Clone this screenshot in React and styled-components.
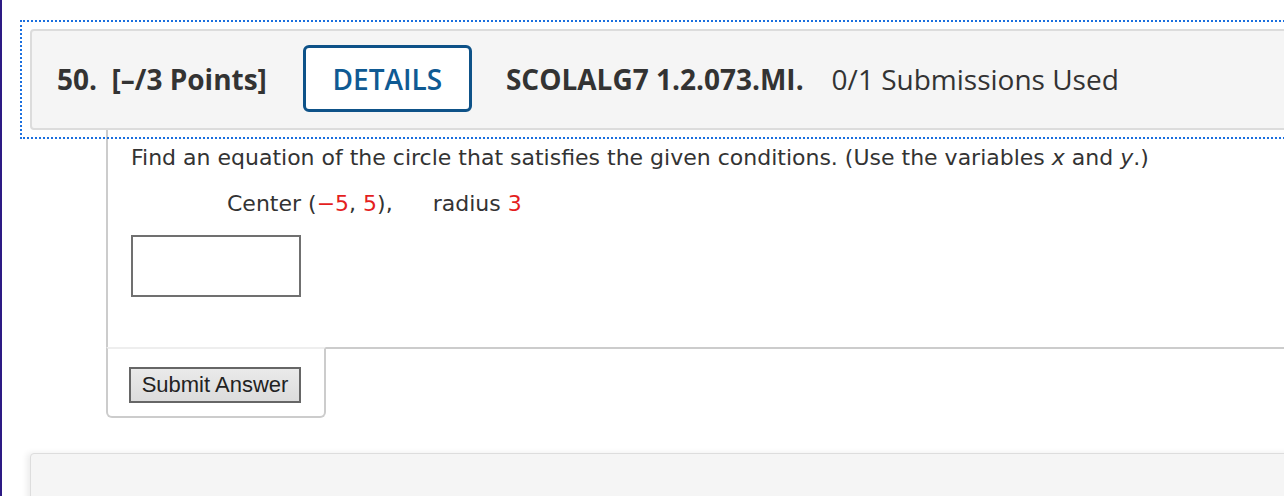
import React from 'react';
import styled, { createGlobalStyle } from 'styled-components';

const GlobalStyle = createGlobalStyle`
  html, body {
    margin: 0;
    padding: 0;
    background: #fff;
    overflow: hidden;
  }
`;

function App() {
  return (
    <>
      <GlobalStyle />
      <Page>
        <FocusRing>
          <QuestionHeader>
            <Number>50.&nbsp; [–/3 Points]</Number>
            <DetailsButton>DETAILS</DetailsButton>
            <Code>SCOLALG7 1.2.073.MI.</Code>
            <Submissions>0/1 Submissions Used</Submissions>
          </QuestionHeader>
        </FocusRing>

        <QuestionBody>
          <Prompt>
            Find an equation of the circle that satisfies the given conditions. (Use the variables <i>x</i> and <i>y</i>.)
          </Prompt>
          <Given>
            Center (<Red>−5</Red>, <Red>5</Red>),<Spacer />radius <Red>3</Red>
          </Given>
          <AnswerInput type="text" />
        </QuestionBody>
        <Footer>
          <SubmitButton>Submit Answer</SubmitButton>
        </Footer>

        <NextCard />
      </Page>
    </>
  );
}

export default App;

const Page = styled.div`
  min-height: 496px;
  border-left: 2px solid #2d1a84;
  padding: 20px 0 0 18px;
  display: flex;
  flex-direction: column;
  margin-right: -60px;
`;

const FocusRing = styled.div`
  position: relative;
  z-index: 1;
  border: 2px dotted #1a6fdf;
  padding: 7px 8px;
`;

const QuestionHeader = styled.div`
  display: flex;
  align-items: center;
  height: 95px;
  padding: 0 0 2px 25px;
  background: #f5f5f5;
  border: 2px solid #dcdcdc;
  border-radius: 4px;
  font-family: "Open Sans", sans-serif;
  font-size: 28px;
  color: #333;
`;

const Number = styled.span`
  font-weight: 700;
  white-space: pre;
`;

const DetailsButton = styled.button`
  box-sizing: border-box;
  width: 169px;
  height: 67px;
  margin-left: 36px;
  background: #fff;
  border: 3px solid #0e5288;
  border-radius: 6px;
  font-family: "Open Sans", sans-serif;
  font-size: 28px;
  font-weight: 600;
  color: #0f5a93;
  padding: 0;
`;

const Code = styled.span`
  margin-left: 34px;
  font-weight: 700;
`;

const Submissions = styled.span`
  margin-left: 28px;
  font-weight: 400;
`;

const QuestionBody = styled.div`
  margin: -9px 0 0 86px;
  padding: 14px 0 50px 23px;
  border-left: 2px solid #cccccc;
  border-bottom: 2px solid #cccccc;
  font-family: "DejaVu Sans", Verdana, sans-serif;
  font-size: 22px;
  line-height: 28px;
  color: #333;
`;

const Prompt = styled.div``;

const Given = styled.div`
  margin: 18px 0 0 96px;
  display: flex;
  align-items: baseline;
  white-space: pre;
`;

const Red = styled.span`
  color: #e41e1e;
`;

const Spacer = styled.span`
  display: inline-block;
  width: 40px;
`;

const AnswerInput = styled.input`
  display: block;
  box-sizing: border-box;
  width: 170px;
  height: 62px;
  margin-top: 17px;
  border: 2px solid #707070;
  background: #fff;
`;

const Footer = styled.div`
  box-sizing: border-box;
  width: 220px;
  margin: -2px 0 0 86px;
  padding: 18px 0 13px 21px;
  border: 2px solid #cccccc;
  border-top-color: #eeeeee;
  border-radius: 0 0 6px 6px;
  background: #fff;
`;

const SubmitButton = styled.button`
  box-sizing: border-box;
  width: 172px;
  height: 36px;
  padding: 0;
  border: 2px solid #666;
  background: linear-gradient(#eaeaea, #dcdcdc);
  font-family: "Liberation Sans", Arial, sans-serif;
  font-size: 22px;
  color: #222;
`;

const NextCard = styled.div`
  margin: 35px 0 0 10px;
  height: 80px;
  background: #f5f5f5;
  border: 1px solid #dddddd;
  border-radius: 4px;
  box-shadow: -3px 0 6px rgba(0, 0, 0, 0.08);
`;
